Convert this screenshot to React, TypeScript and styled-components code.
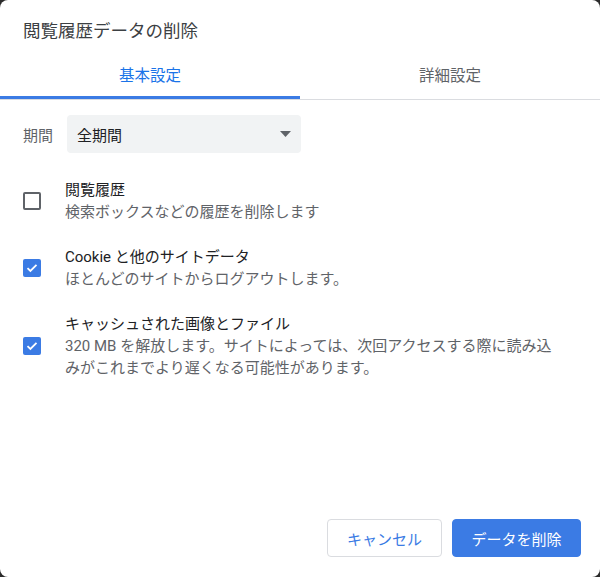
import React from "react";
import styled, { createGlobalStyle } from "styled-components";

const GlobalStyle = createGlobalStyle`
  html, body {
    margin: 0;
    padding: 0;
    background: #2b2b2b;
  }
  body {
    font-family: Roboto, "Noto Sans CJK JP", sans-serif;
  }
`;

const Dialog = styled.div`
  box-sizing: border-box;
  display: flex;
  flex-direction: column;
  width: 600px;
  height: 577px;
  background: #ffffff;
  border-radius: 8px;
  overflow: hidden;
`;

const Title = styled.h1`
  margin: 0;
  padding: 19px 23px 8px;
  font-size: 17.5px;
  line-height: 24px;
  font-weight: 400;
  color: #3c4043;
`;

const TabBar = styled.div`
  display: grid;
  grid-template-columns: 1fr 1fr;
  border-bottom: 1px solid #dadce0;
`;

const Tab = styled.div<{ active?: boolean }>`
  box-sizing: border-box;
  display: flex;
  align-items: center;
  justify-content: center;
  height: 48px;
  padding-bottom: 3px;
  font-size: 15.5px;
  color: ${(p) => (p.active ? "#1a73e8" : "#5f6368")};
  box-shadow: ${(p) => (p.active ? "inset 0 -3px 0 #3b7be4" : "none")};
`;

const Body = styled.div`
  display: flex;
  flex-direction: column;
  padding: 15px 0 0 23px;
`;

const PeriodRow = styled.div`
  display: flex;
  align-items: center;
  gap: 14px;
`;

const Label = styled.span`
  font-size: 15px;
  color: #5f6368;
`;

const Select = styled.div`
  box-sizing: border-box;
  display: flex;
  align-items: center;
  justify-content: space-between;
  width: 234px;
  height: 38px;
  padding: 0 10px;
  background: #f1f3f4;
  border-radius: 4px;
  font-size: 15px;
  color: #202124;
`;

const List = styled.div`
  display: flex;
  flex-direction: column;
  gap: 23px;
  margin-top: 26px;
`;

const Row = styled.div`
  display: flex;
  align-items: center;
  gap: 24px;
`;

const Box = styled.div<{ checked?: boolean }>`
  box-sizing: border-box;
  flex: none;
  display: flex;
  align-items: center;
  justify-content: center;
  width: 18px;
  height: 18px;
  border-radius: 2px;
  background: ${(p) => (p.checked ? "#3b7be4" : "transparent")};
  border: ${(p) => (p.checked ? "none" : "2px solid #5f6368")};
`;

const Texts = styled.div`
  display: flex;
  flex-direction: column;
  font-size: 15px;
  line-height: 22px;
  padding-right: 12px;
`;

const ItemTitle = styled.span`
  color: #202124;
`;

const ItemSub = styled.span`
  color: #5f6368;
  white-space: nowrap;
`;

const Footer = styled.div`
  display: flex;
  justify-content: flex-end;
  gap: 10px;
  margin-top: auto;
  padding: 0 19px 20px;
`;

const Button = styled.button<{ primary?: boolean }>`
  box-sizing: border-box;
  height: 38px;
  padding: 0 ${(p) => (p.primary ? "18px" : "19px")};
  min-width: ${(p) => (p.primary ? "129px" : "115px")};
  border-radius: 4px;
  font-family: inherit;
  font-size: 15px;
  border: 1px solid ${(p) => (p.primary ? "#3b7be4" : "#dadce0")};
  background: ${(p) => (p.primary ? "#3b7be4" : "#ffffff")};
  color: ${(p) => (p.primary ? "#ffffff" : "#3b7be4")};
`;

const Check = ({ checked }: { checked?: boolean }) => (
  <Box checked={checked}>
    {checked && (
      <svg width="12" height="10" viewBox="0 0 12 10">
        <path
          d="M1.5 5.2 L4.4 8 L10.5 1.8"
          fill="none"
          stroke="#ffffff"
          strokeWidth="1.8"
        />
      </svg>
    )}
  </Box>
);

const items = [
  {
    title: "閲覧履歴",
    sub: ["検索ボックスなどの履歴を削除します"],
    checked: false,
  },
  {
    title: "Cookie と他のサイトデータ",
    sub: ["ほとんどのサイトからログアウトします。"],
    checked: true,
  },
  {
    title: "キャッシュされた画像とファイル",
    sub: [
      "320 MB を解放します。サイトによっては、次回アクセスする際に読み込",
      "みがこれまでより遅くなる可能性があります。",
    ],
    checked: true,
  },
];

export default function App() {
  return (
    <>
      <GlobalStyle />
      <Dialog>
        <Title>閲覧履歴データの削除</Title>
        <TabBar>
          <Tab active>基本設定</Tab>
          <Tab>詳細設定</Tab>
        </TabBar>
        <Body>
          <PeriodRow>
            <Label>期間</Label>
            <Select>
              <span>全期間</span>
              <svg width="11" height="6" viewBox="0 0 11 6">
                <path d="M0 0 L11 0 L5.5 6 Z" fill="#5f6368" />
              </svg>
            </Select>
          </PeriodRow>
          <List>
            {items.map((it) => (
              <Row key={it.title}>
                <Check checked={it.checked} />
                <Texts>
                  <ItemTitle>{it.title}</ItemTitle>
                  {it.sub.map((s) => (
                    <ItemSub key={s}>{s}</ItemSub>
                  ))}
                </Texts>
              </Row>
            ))}
          </List>
        </Body>
        <Footer>
          <Button>キャンセル</Button>
          <Button primary>データを削除</Button>
        </Footer>
      </Dialog>
    </>
  );
}
